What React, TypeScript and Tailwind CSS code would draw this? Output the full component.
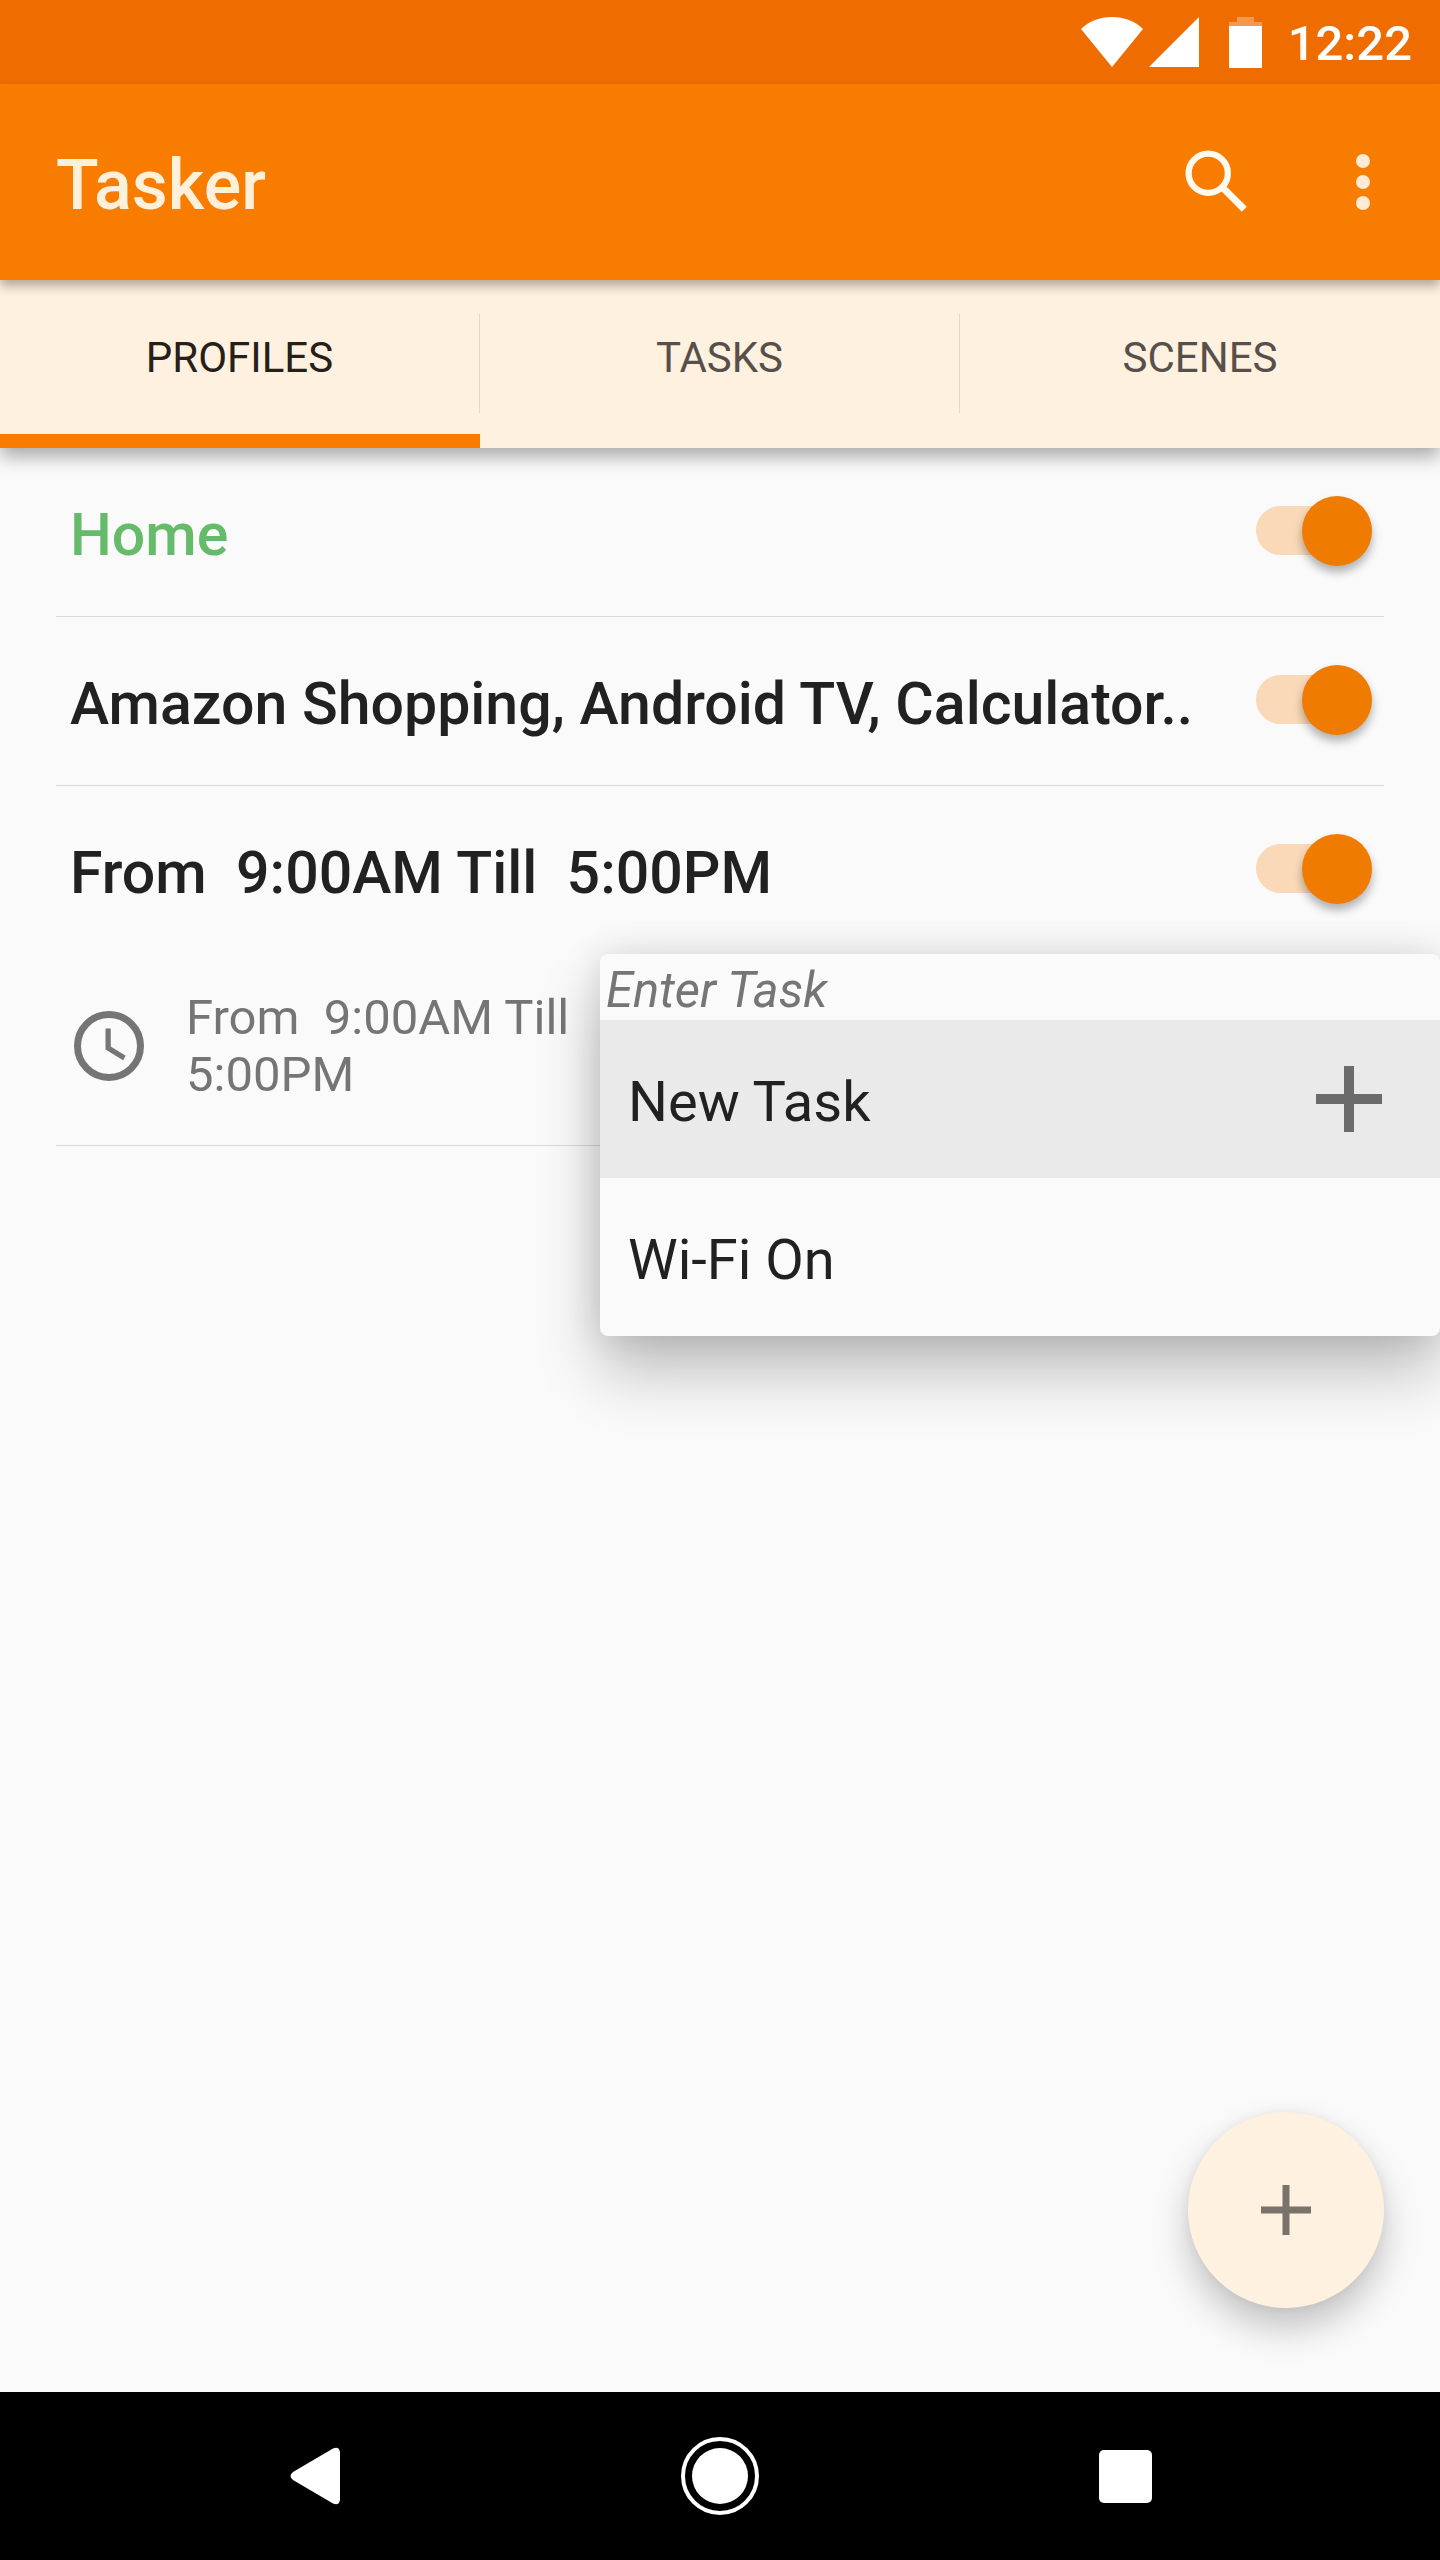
import { useState } from 'react'
import { clsx } from 'clsx'

interface Profile {
  id: string
  name: string
  active?: boolean
  context?: string
}

const TABS = ['PROFILES', 'TASKS', 'SCENES']

const PROFILES: Profile[] = [
  { id: 'home', name: 'Home', active: true },
  { id: 'apps', name: 'Amazon Shopping, Android TV, Calculator..' },
  { id: 'work', name: 'From  9:00AM Till  5:00PM', context: 'From  9:00AM Till  5:00PM' },
]

function StatusBar() {
  return (
    <div className="flex h-[84px] items-center justify-end bg-[#ef6c00] pr-7 text-white">
      <svg className="mr-1.5 h-[50px] w-[62px]" viewBox="0 0 62 50" fill="currentColor">
        <path d="M31 50 L0 12 C8 4 19 0 31 0 C43 0 54 4 62 12 Z" />
      </svg>
      <svg className="mr-[30px] h-[50px] w-[50px]" viewBox="0 0 50 50" fill="currentColor">
        <path d="M0 50 L50 0 V50 Z" />
      </svg>
      <svg className="mr-[26px] h-[51px] w-[33px]" viewBox="0 0 33 51" fill="currentColor">
        <path d="M8 0 H25 V5 H33 V9 H0 V5 H8 Z" opacity="0.3" />
        <path d="M0 9 H33 V51 H0 Z" />
      </svg>
      <span className="pt-1 text-[49px] leading-[56px] font-medium">12:22</span>
    </div>
  )
}

function AppBar() {
  return (
    <header className="relative z-20 flex h-[196px] items-center bg-[#f77c00] pr-[35px] pl-14 shadow-[0_6px_10px_rgba(0,0,0,0.3)]">
      <h1 className="flex-1 pt-1.5 text-[70px] leading-[84px] font-medium text-[#fff0dc]">Tasker</h1>
      <div className="flex gap-[62px]">
        <button type="button" aria-label="Search" className="text-[#fffaf0]">
          <svg className="size-[84px]" viewBox="0 0 24 24" fill="none" stroke="currentColor">
            <circle cx="9.5" cy="9.5" r="5.6" strokeWidth="1.8" />
            <path d="M13.9 13.9 L19.8 19.8" strokeWidth="2" />
          </svg>
        </button>
        <button type="button" aria-label="More options" className="text-[#fdebd8]">
          <svg className="size-[84px]" viewBox="0 0 24 24" fill="currentColor">
            <circle cx="12" cy="6" r="2" />
            <circle cx="12" cy="12" r="2" />
            <circle cx="12" cy="18" r="2" />
          </svg>
        </button>
      </div>
    </header>
  )
}

function TabBar() {
  const [selected, setSelected] = useState('PROFILES')

  return (
    <div
      role="tablist"
      className="relative z-10 grid h-[168px] grid-cols-3 bg-[#fff1df] shadow-[0_8px_18px_rgba(0,0,0,0.34)]"
    >
      {TABS.map((tab) => (
        <button
          key={tab}
          type="button"
          role="tab"
          aria-selected={tab === selected}
          onClick={() => setSelected(tab)}
          className={clsx(
            'group flex flex-col text-[42px] leading-[49px]',
            tab === selected ? 'text-[#262018]' : 'text-[#57504a]'
          )}
        >
          <span className="flex w-full flex-1 items-center">
            <span className="flex-1">{tab}</span>
            <span className="mt-3 h-[99px] w-px bg-[#e5d9c9] group-last:hidden" />
          </span>
          <span className={clsx('h-3.5 w-full', tab === selected && 'bg-[#f77c00]')} />
        </button>
      ))}
    </div>
  )
}

function TaskMenu() {
  return (
    <div
      role="menu"
      aria-labelledby="task-menu-title"
      className="absolute top-0 right-0 w-7/12 rounded-lg bg-[#fafafa] shadow-[0_36px_64px_rgba(0,0,0,0.24),0_0_36px_rgba(0,0,0,0.12)]"
    >
      <p id="task-menu-title" className="px-1.5 pt-2 text-[49px] leading-[58px] text-[#757575] italic">
        Enter Task
      </p>
      <button
        type="button"
        role="menuitem"
        className="flex h-[158px] w-full items-center justify-between bg-[#eaeaea] pr-[58px] pl-7 text-[56px] leading-[66px]"
      >
        <span className="pt-1.5">New Task</span>
        <svg className="size-[66px]" viewBox="0 0 66 66" fill="none" stroke="#6b6b6b" strokeWidth="10">
          <path d="M33 0 V66 M0 33 H66" />
        </svg>
      </button>
      <button
        type="button"
        role="menuitem"
        className="flex h-[158px] w-full items-center rounded-b-lg pr-[58px] pl-7 text-[56px] leading-[66px]"
      >
        <span className="pt-1.5">Wi-Fi On</span>
      </button>
    </div>
  )
}

function ProfileRow({ profile }: { profile: Profile }) {
  const [enabled, setEnabled] = useState(true)

  return (
    <li>
      <div className="flex h-[168px] items-center justify-between pr-[68px] pl-[70px]">
        <label
          htmlFor={profile.id}
          className={clsx(
            'pt-1.5 text-[59px] leading-[70px] font-medium whitespace-pre',
            profile.active && 'text-[#66bb6a]'
          )}
        >
          {profile.name}
        </label>
        <input
          id={profile.id}
          type="checkbox"
          role="switch"
          checked={enabled}
          onChange={(e) => setEnabled(e.target.checked)}
          className="relative mb-0.5 h-[70px] w-[116px] shrink-0 appearance-none before:absolute before:inset-x-0 before:top-[10px] before:h-[49px] before:rounded-full before:bg-[#f9d9b8] after:absolute after:top-0 after:left-0 after:size-[70px] after:rounded-full after:bg-[#bdbdbd] after:shadow-[0_6px_10px_rgba(0,0,0,0.3)] checked:after:left-[46px] checked:after:bg-[#ef7b00]"
        />
      </div>

      {profile.context && (
        <div className="relative">
          <div className="flex w-5/12 items-center pt-[35px] pb-[42px] pl-[67px] text-[#757575]">
            <svg className="mr-[35px] size-[84px] shrink-0" viewBox="0 0 24 24" fill="none" stroke="currentColor">
              <circle cx="12" cy="12" r="9" strokeWidth="2" />
              <path d="M11.75 7 V12.6 L16.4 15.4" strokeWidth="1.5" />
            </svg>
            <p className="text-[49px] leading-[57px] whitespace-pre-wrap">{profile.context}</p>
          </div>
          <TaskMenu />
        </div>
      )}
      <hr className="mx-14 border-[#dadada]" />
    </li>
  )
}

function NavBar() {
  return (
    <nav className="grid h-[168px] grid-cols-3 items-center bg-black px-28 text-white">
      <button type="button" aria-label="Back" className="flex justify-center">
        <svg className="h-[58px] w-[50px]" viewBox="0 0 50 58" fill="currentColor">
          <path d="M3 25 L43 1.5 Q49 -1 50 5 V53 Q49 59 43 56.5 L3 33 Q-2 29 3 25 Z" />
        </svg>
      </button>
      <button type="button" aria-label="Home" className="flex justify-center">
        <svg className="size-20" viewBox="0 0 80 80" fill="none">
          <circle cx="40" cy="40" r="37" stroke="currentColor" strokeWidth="4" />
          <circle cx="40" cy="40" r="28" fill="currentColor" />
        </svg>
      </button>
      <button type="button" aria-label="Recent apps" className="flex justify-center">
        <span className="size-[53px] rounded-[5px] bg-white" />
      </button>
    </nav>
  )
}

export default function App() {
  return (
    <div className="flex min-h-screen flex-col overflow-x-hidden bg-[#fafafa] font-[Roboto,sans-serif] text-[#212121]">
      <StatusBar />
      <AppBar />
      <TabBar />

      <main className="relative flex-1">
        <ul>
          {PROFILES.map((profile) => (
            <ProfileRow key={profile.id} profile={profile} />
          ))}
        </ul>

        {/* Add profile */}
        <button
          type="button"
          aria-label="Add profile"
          className="absolute right-14 bottom-[84px] flex size-[196px] items-center justify-center rounded-full bg-[#fff1df] shadow-[0_20px_36px_rgba(0,0,0,0.22),0_0_12px_rgba(0,0,0,0.06)]"
        >
          <svg className="size-[50px]" viewBox="0 0 50 50" fill="none" stroke="#7a736b" strokeWidth="7">
            <path d="M25 0 V50 M0 25 H50" />
          </svg>
        </button>
      </main>

      <NavBar />
    </div>
  )
}
